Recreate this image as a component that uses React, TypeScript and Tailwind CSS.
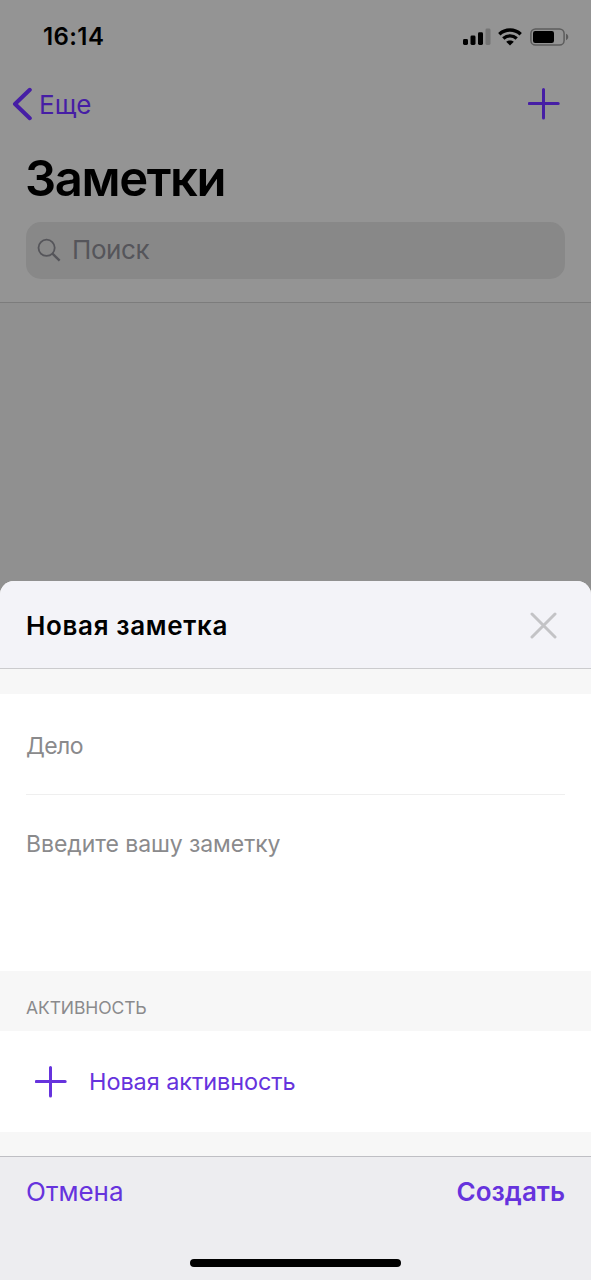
import type { ReactNode } from 'react'

function PlusIcon() {
    return (
        <svg width="32" height="32" viewBox="0 0 32 32" fill="none" stroke="currentColor" strokeWidth="3" strokeLinecap="round">
            <path d="M15.5 1.5V30M1.3 15.5H30.2" />
        </svg>
    )
}

function StatusBar() {
    return (
        <div className="flex h-[74px] items-center justify-between pl-[43px] pr-[22px]">
            <span className="text-[24px] font-semibold leading-none tracking-[0.4px]">16:14</span>
            <div className="flex items-center">
                <svg width="28" height="18" viewBox="0 0 28 18" fill="currentColor">
                    <rect x="0" y="11" width="5" height="6" rx="1.4" />
                    <rect x="7.5" y="7.5" width="5" height="9.5" rx="1.4" />
                    <rect x="15" y="4.3" width="5" height="12.7" rx="1.4" />
                    <rect x="22.5" y="0.5" width="5" height="16.5" rx="1.4" className="text-[#757575]" />
                </svg>
                <svg className="ml-[7px]" width="24" height="18" viewBox="0 0 24 18" fill="none" stroke="currentColor" strokeWidth="3.4">
                    <path d="M1.3 6.2C7.4 0.6 16.6 0.6 22.7 6.2" />
                    <path d="M5.3 10.6C9.2 7 14.8 7 18.7 10.6" />
                    <path d="M12 17.6L8.2 13.8C10.3 12 13.7 12 15.8 13.8Z" fill="currentColor" stroke="none" />
                </svg>
                <svg className="ml-[8px]" width="39" height="18" viewBox="0 0 39 18">
                    <rect x="0.9" y="0.9" width="33.2" height="16.2" rx="4.6" fill="none" stroke="#5c5c5c" strokeWidth="1.5" />
                    <rect x="3" y="3" width="21" height="12" rx="2.2" fill="#000" />
                    <path d="M36 5.8C39 7 39 11 36 12.2Z" fill="#5c5c5c" />
                </svg>
            </div>
        </div>
    )
}

function SectionHeader({ children }: { children: ReactNode }) {
    return (
        <div className="flex h-[60px] items-end bg-[#f7f7f7] px-[26px] pb-[13px]">
            <h3 className="text-[17.5px] leading-5 tracking-[-0.1px] text-[#8a8a8c]">{children}</h3>
        </div>
    )
}

function NotesScreen() {
    return (
        <header className="h-[303px] border-b border-[#7c7c7c] bg-[#949494]">
            <StatusBar />
            <div className="flex h-[60px] items-center justify-between pl-[12px] pr-[31px] text-[#461ea5]">
                <button className="flex items-center gap-[7px]">
                    <svg width="20" height="34" viewBox="0 0 20 34" fill="none" stroke="currentColor" strokeWidth="4" strokeLinecap="round" strokeLinejoin="round">
                        <path d="M17.8 2.8L3 17L17.8 31.2" />
                    </svg>
                    <span className="pt-0.5 text-[26px] leading-none">Еще</span>
                </button>
                <button>
                    <PlusIcon />
                </button>
            </div>
            <h1 className="px-[25px] pt-[15px] text-[49px] font-semibold leading-[60px] tracking-[-1.4px]">Заметки</h1>
            <div className="mx-[26px] mt-[13px] flex h-[57px] items-center gap-[11px] rounded-[15px] bg-[#888888] pb-0.5 pl-[11px] text-[#55555a]">
                <svg width="24" height="24" viewBox="0 0 24 24" fill="none" stroke="currentColor" strokeWidth="1.8">
                    <circle cx="9.6" cy="9.8" r="8.1" />
                    <path d="M15.5 15.7L22.6 22.6" strokeWidth="2.4" />
                </svg>
                <span className="text-[26px] leading-none tracking-[-0.4px]">Поиск</span>
            </div>
        </header>
    )
}

function NewNoteSheet() {
    return (
        <section className="flex flex-1 flex-col overflow-hidden rounded-t-[14px] bg-[#f7f7f7]">
            <div className="flex h-[88px] items-center justify-between border-b border-[#cbcbce] bg-[#f3f3f8] pl-[26px] pr-[34px] pt-0.5">
                <h2 className="text-[26px] font-semibold leading-8 tracking-[0.65px]">Новая заметка</h2>
                <button className="text-[#c3c3c6]">
                    <svg width="27" height="27" viewBox="0 0 27 27" fill="none" stroke="currentColor" strokeWidth="3" strokeLinecap="round">
                        <path d="M2 2L25 25M25 2L2 25" />
                    </svg>
                </button>
            </div>

            <div className="mt-[25px] h-[277px] bg-white px-[26px] text-[23px] leading-8 tracking-[-0.05px] text-[#8a8a8c]">
                <div className="flex h-[101px] items-center border-b border-[#efefef] pt-[3px] tracking-[-0.6px]">Дело</div>
                <div className="pt-[33px]">Введите вашу заметку</div>
            </div>

            <SectionHeader>АКТИВНОСТЬ</SectionHeader>

            <button className="flex h-[101px] items-center gap-[22px] bg-white pl-[35px] text-[#6633dd]">
                <PlusIcon />
                <span className="text-[23.5px] leading-8 tracking-[-0.08px]">Новая активность</span>
            </button>

            <footer className="mt-[24px] flex flex-1 flex-col items-center justify-between border-t border-[#bfbfc4] bg-[#ededf0] pb-[13px] pt-[19px]">
                <div className="flex w-full justify-between px-[26px] text-[26px] leading-8 text-[#6633dd]">
                    <button>Отмена</button>
                    <button className="font-semibold">Создать</button>
                </div>
                <div className="h-[8px] w-[211px] rounded-full bg-black" />
            </footer>
        </section>
    )
}

export default function App() {
    return (
        <div className="flex h-[1280px] w-[591px] flex-col overflow-hidden bg-[#909090] font-['Inter',sans-serif] text-black">
            <div className="h-[581px] shrink-0">
                <NotesScreen />
            </div>
            <NewNoteSheet />
        </div>
    )
}
